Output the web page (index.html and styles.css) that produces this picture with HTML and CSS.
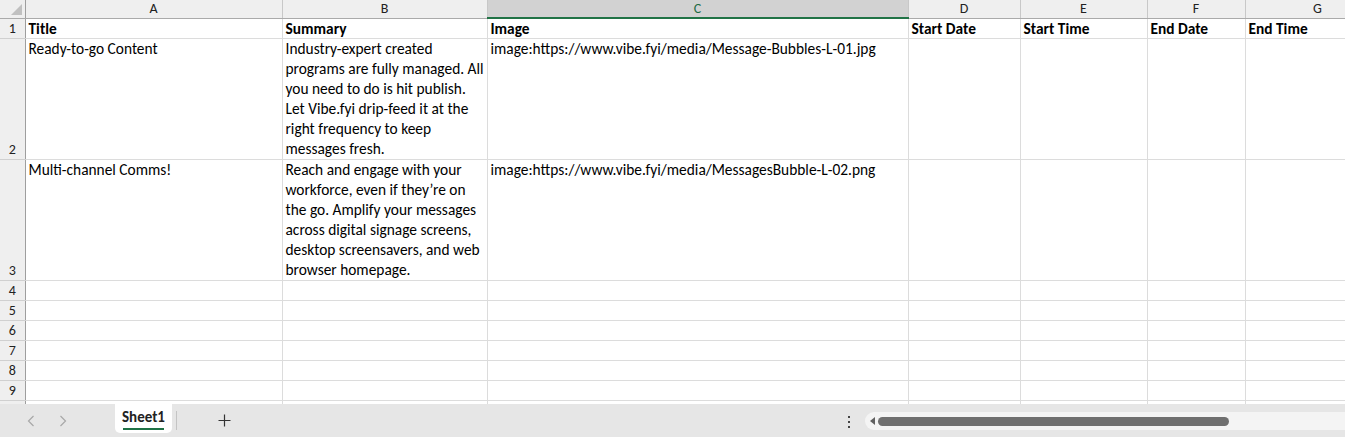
FILE: index.html
```html
<!DOCTYPE html>
<html lang="en">
<head>
    <meta charset="UTF-8">
    <meta name="viewport" content="width=device-width, initial-scale=1.0">
    <title>Sheet1</title>
    <link rel="stylesheet" href="styles.css">
</head>
<body>
    <div class="workbook">
        <div class="sheet">
            <table class="grid">
                <colgroup>
                    <col class="w-rowhead">
                    <col class="w-a">
                    <col class="w-b">
                    <col class="w-c">
                    <col class="w-d">
                    <col class="w-e">
                    <col class="w-f">
                    <col class="w-g">
                </colgroup>
                <thead>
                    <tr class="colheads">
                        <th class="corner"><span class="corner-tri"></span></th>
                        <th>A</th>
                        <th>B</th>
                        <th class="selected">C</th>
                        <th>D</th>
                        <th>E</th>
                        <th>F</th>
                        <th>G</th>
                    </tr>
                </thead>
                <tbody>
                    <tr class="row">
                        <th class="rowhead">1</th>
                        <td class="bold">Title</td>
                        <td class="bold">Summary</td>
                        <td class="bold">Image</td>
                        <td class="bold">Start Date</td>
                        <td class="bold">Start Time</td>
                        <td class="bold">End Date</td>
                        <td class="bold">End Time</td>
                    </tr>
                    <tr class="row tall">
                        <th class="rowhead">2</th>
                        <td>Ready-to-go Content</td>
                        <!-- wrap text cell: keep Excel's line breaks -->
                        <td class="nowrap">Industry-expert created<br>programs are fully managed. All<br>you need to do is hit publish.<br>Let Vibe.fyi drip-feed it at the<br>right frequency to keep<br>messages fresh.</td>
                        <td class="nowrap">image:https://www.vibe.fyi/media/Message-Bubbles-L-01.jpg</td>
                        <td></td><td></td><td></td><td></td>
                    </tr>
                    <tr class="row tall">
                        <th class="rowhead">3</th>
                        <td>Multi-channel Comms!</td>
                        <td class="nowrap">Reach and engage with your<br>workforce, even if they’re on<br>the go. Amplify your messages<br>across digital signage screens,<br>desktop screensavers, and web<br>browser homepage.</td>
                        <td class="nowrap">image:https://www.vibe.fyi/media/MessagesBubble-L-02.png</td>
                        <td></td><td></td><td></td><td></td>
                    </tr>
                    <tr class="row"><th class="rowhead">4</th><td></td><td></td><td></td><td></td><td></td><td></td><td></td></tr>
                    <tr class="row"><th class="rowhead">5</th><td></td><td></td><td></td><td></td><td></td><td></td><td></td></tr>
                    <tr class="row"><th class="rowhead">6</th><td></td><td></td><td></td><td></td><td></td><td></td><td></td></tr>
                    <tr class="row"><th class="rowhead">7</th><td></td><td></td><td></td><td></td><td></td><td></td><td></td></tr>
                    <tr class="row"><th class="rowhead">8</th><td></td><td></td><td></td><td></td><td></td><td></td><td></td></tr>
                    <tr class="row"><th class="rowhead">9</th><td></td><td></td><td></td><td></td><td></td><td></td><td></td></tr>
                    <tr class="row"><th class="rowhead"></th><td></td><td></td><td></td><td></td><td></td><td></td><td></td></tr>
                </tbody>
            </table>
        </div>

        <div class="tabbar">
            <div class="nav-arrows">
                <svg class="arrow" width="8" height="12" viewBox="0 0 8 12"><path d="M6.5 1 L1.5 6 L6.5 11" fill="none" stroke="#a8a8a8" stroke-width="1.2"/></svg>
                <svg class="arrow" width="8" height="12" viewBox="0 0 8 12"><path d="M1.5 1 L6.5 6 L1.5 11" fill="none" stroke="#a8a8a8" stroke-width="1.2"/></svg>
            </div>
            <div class="tab active">Sheet1</div>
            <span class="tab-sep"></span>
            <svg class="add-sheet" width="13" height="13" viewBox="0 0 13 13"><path d="M6.5 0.5 V12.5 M0.5 6.5 H12.5" stroke="#333" stroke-width="1.2"/></svg>
            <div class="spacer"></div>
            <span class="more">
                <i></i><i></i><i></i>
            </span>
            <div class="hscroll">
                <span class="scroll-left"></span>
                <span class="thumb"></span>
            </div>
        </div>
    </div>
</body>
</html>
```

FILE: styles.css
```css
/* reset */
* {
    margin: 0;
    padding: 0;
    box-sizing: border-box;
}

html, body {
    height: 100%;
    overflow: hidden;
}

body {
    font-family: Carlito, Calibri, 'Lato', 'Open Sans', sans-serif;
    font-size: 15.4px;
    color: #000;
    background: #fff;
}

.workbook {
    display: flex;
    flex-direction: column;
    height: 437px;
}

/* grid area */
.sheet {
    flex: 1;
    overflow: hidden;
}

.grid {
    border-collapse: collapse;
    table-layout: fixed;
    width: 1370px;
}

.w-rowhead { width: 25px; }
.w-a { width: 257px; }
.w-b { width: 205px; }
.w-c { width: 421px; }
.w-d { width: 112px; }
.w-e { width: 127px; }
.w-f { width: 98px; }
.w-g { width: 145px; }

/* column headers */
.colheads th {
    height: 18px;
    background: #efefef;
    font-weight: normal;
    font-size: 14px;
    color: #222;
    text-align: center;
    border-right: 1px solid #c8c8c8;
    border-bottom: 1px solid #aaaaaa;
    line-height: 17px;
    vertical-align: middle;
}

.colheads th.selected {
    background: #d2d2d2;
    color: #1d6b45;
    border-bottom: 2px solid #217346;
}

.colheads th.corner {
    position: relative;
    border-right: 1px solid #9e9e9e;
}

.corner-tri {
    position: absolute;
    right: 3px;
    bottom: 3px;
    width: 0;
    height: 0;
    border-left: 11px solid transparent;
    border-bottom: 11px solid #c0c0c0;
}

/* rows */
.row {
    height: 20px;
}

.row.tall {
    height: 119px;
}

.rowhead {
    background: #efefef;
    font-weight: normal;
    font-size: 14px;
    color: #222;
    text-align: center;
    vertical-align: bottom;
    line-height: 19px;
    border-right: 1px solid #9e9e9e;
    border-bottom: 1px solid #d0d0d0;
}

.row td {
    border-right: 1px solid #dcdcdc;
    border-bottom: 1px solid #dcdcdc;
    vertical-align: top;
    padding: 0 3px 0 3px;
    line-height: 20px;
    overflow: visible;
}

.row td.bold {
    font-weight: bold;
    vertical-align: bottom;
    line-height: 19px;
}

.row td.nowrap {
    white-space: nowrap;
}

/* bottom bar */
.tabbar {
    height: 33px;
    background: #e6e6e6;
    display: flex;
    align-items: flex-start;
    flex-shrink: 0;
}

.nav-arrows {
    display: flex;
    width: 115px;
    height: 33px;
    align-items: center;
    padding-left: 27px;
    gap: 24px;
}

.tab {
    background: #fff;
    height: 29px;
    width: 57px;
    border-radius: 0 0 5px 5px;
    font-weight: bold;
    font-size: 15px;
    color: #222;
    text-align: center;
    padding-top: 4px;
    position: relative;
}

.tab.active::after {
    content: "";
    position: absolute;
    left: 8px;
    right: 8px;
    bottom: 3px;
    height: 2px;
    background: #1e7145;
}

.tab-sep {
    width: 1px;
    height: 19px;
    background: #c4c4c4;
    margin: 7px 0 0 4px;
}

.add-sheet {
    margin: 10px 0 0 41px;
}

.spacer {
    flex: 1;
}

.more {
    display: flex;
    flex-direction: column;
    gap: 3px;
    margin: 12px 15px 0 0;
}

.more i {
    display: block;
    width: 2px;
    height: 2px;
    background: #444;
}

.hscroll {
    width: 480px;
    height: 18px;
    margin-top: 8px;
    background: #f4f4f4;
    border-radius: 9px 0 0 9px;
    display: flex;
    align-items: center;
    padding-left: 5px;
}

.scroll-left {
    width: 0;
    height: 0;
    border-top: 4px solid transparent;
    border-bottom: 4px solid transparent;
    border-right: 5px solid #606060;
    margin-right: 3px;
}

.thumb {
    width: 351px;
    height: 9px;
    background: #6f6f6f;
    border-radius: 5px;
}
```
